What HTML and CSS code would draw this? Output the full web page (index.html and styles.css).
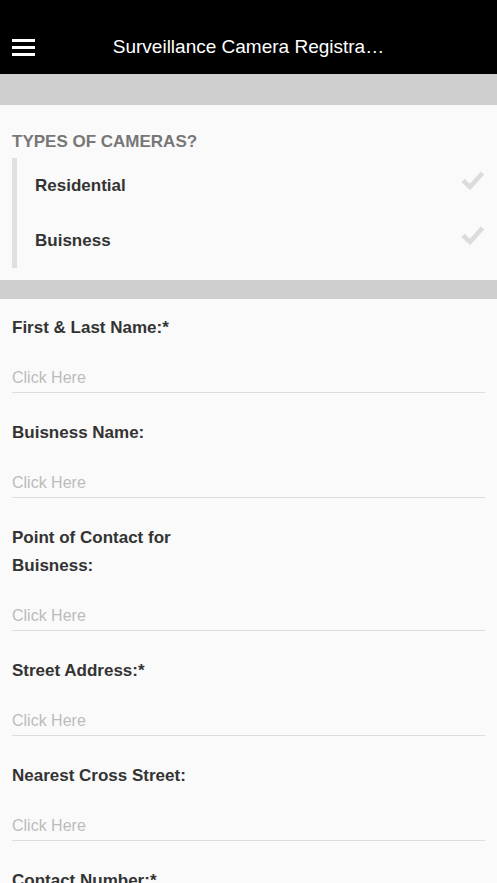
FILE: index.html
```html
<!DOCTYPE html>
<html lang="en">
<head>
<meta charset="UTF-8">
<meta name="viewport" content="width=device-width, initial-scale=1.0">
<title>Surveillance Camera Registration</title>
<link rel="stylesheet" href="styles.css">
</head>
<body>
<div class="topbar">
    <div class="menu-btn">
        <span></span><span></span><span></span>
    </div>
    <div class="title">Surveillance Camera Registra…</div>
    <div></div>
</div>
<div class="band band-top"></div>

<div class="types">
    <h2>TYPES OF CAMERAS?</h2>
    <ul class="options">
        <li>
            <span>Residential</span>
            <svg width="24" height="20" viewBox="0 0 24 20"><path d="M2 10.5 L9 17 L21.5 3" fill="none" stroke="#dcdcdc" stroke-width="4.5" stroke-linejoin="miter"/></svg>
        </li>
        <li>
            <span>Buisness</span>
            <svg width="24" height="20" viewBox="0 0 24 20"><path d="M2 10.5 L9 17 L21.5 3" fill="none" stroke="#dcdcdc" stroke-width="4.5" stroke-linejoin="miter"/></svg>
        </li>
    </ul>
</div>
<div class="band band-mid"></div>

<div class="form">
    <div class="field">
        <label>First &amp; Last Name:*</label>
        <input type="text" placeholder="Click Here">
    </div>
    <div class="field">
        <label>Buisness Name:</label>
        <input type="text" placeholder="Click Here">
    </div>
    <div class="field">
        <label>Point of Contact for Buisness:</label>
        <input type="text" placeholder="Click Here">
    </div>
    <div class="field">
        <label>Street Address:*</label>
        <input type="text" placeholder="Click Here">
    </div>
    <div class="field">
        <label>Nearest Cross Street:</label>
        <input type="text" placeholder="Click Here">
    </div>
    <div class="field">
        <label>Contact Number:*</label>
        <input type="text" placeholder="Click Here">
    </div>
</div>
</body>
</html>
```

FILE: styles.css
```css
body {
    margin: 0;
    background-color: #fafafa;
    font-family: "Liberation Sans", Arial, sans-serif;
    overflow: hidden;
}

.topbar {
    background-color: #000;
    height: 54px;
    padding-top: 20px;
    display: grid;
    grid-template-columns: 70px 1fr 70px;
    align-items: center;
    border-bottom: 1px solid #4a4a4a;
    box-sizing: content-box;
}

.menu-btn {
    padding-left: 12px;
    display: flex;
    flex-direction: column;
    gap: 4px;
}

.menu-btn span {
    display: block;
    width: 23px;
    height: 3px;
    background-color: #fff;
}

.title {
    color: #fff;
    font-size: 19px;
    text-align: center;
    white-space: nowrap;
}

.band {
    background-color: #cfcfcf;
}

.band-top {
    height: 31px;
    margin-top: -1px;
}

.band-mid {
    height: 19px;
}

.types {
    padding: 27px 12px 12px;
}

.types h2 {
    margin: 0 0 6px;
    font-size: 17px;
    line-height: 20px;
    color: #777;
    font-weight: bold;
}

.options {
    list-style: none;
    margin: 0;
    padding: 0;
    border-left: 5px solid #e0e0e0;
}

.options li {
    height: 55px;
    display: flex;
    align-items: center;
    justify-content: space-between;
    padding-left: 18px;
    font-size: 17px;
    font-weight: bold;
    color: #333;
}

.options li svg {
    margin-top: -12px;
}

.form {
    padding: 15px 12px 0;
}

.field + .field {
    margin-top: 26px;
}

.field label {
    display: block;
    max-width: 205px;
    font-size: 17px;
    line-height: 28px;
    font-weight: bold;
    color: #333;
}

.field input {
    display: block;
    width: 100%;
    box-sizing: border-box;
    margin-top: 21px;
    height: 30px;
    padding: 0;
    border: none;
    border-bottom: 1px solid #dedede;
    background: transparent;
    font-family: "Liberation Sans", Arial, sans-serif;
    font-size: 16px;
    outline: none;
}

.field input::placeholder {
    color: #bcbcbc;
}
```
